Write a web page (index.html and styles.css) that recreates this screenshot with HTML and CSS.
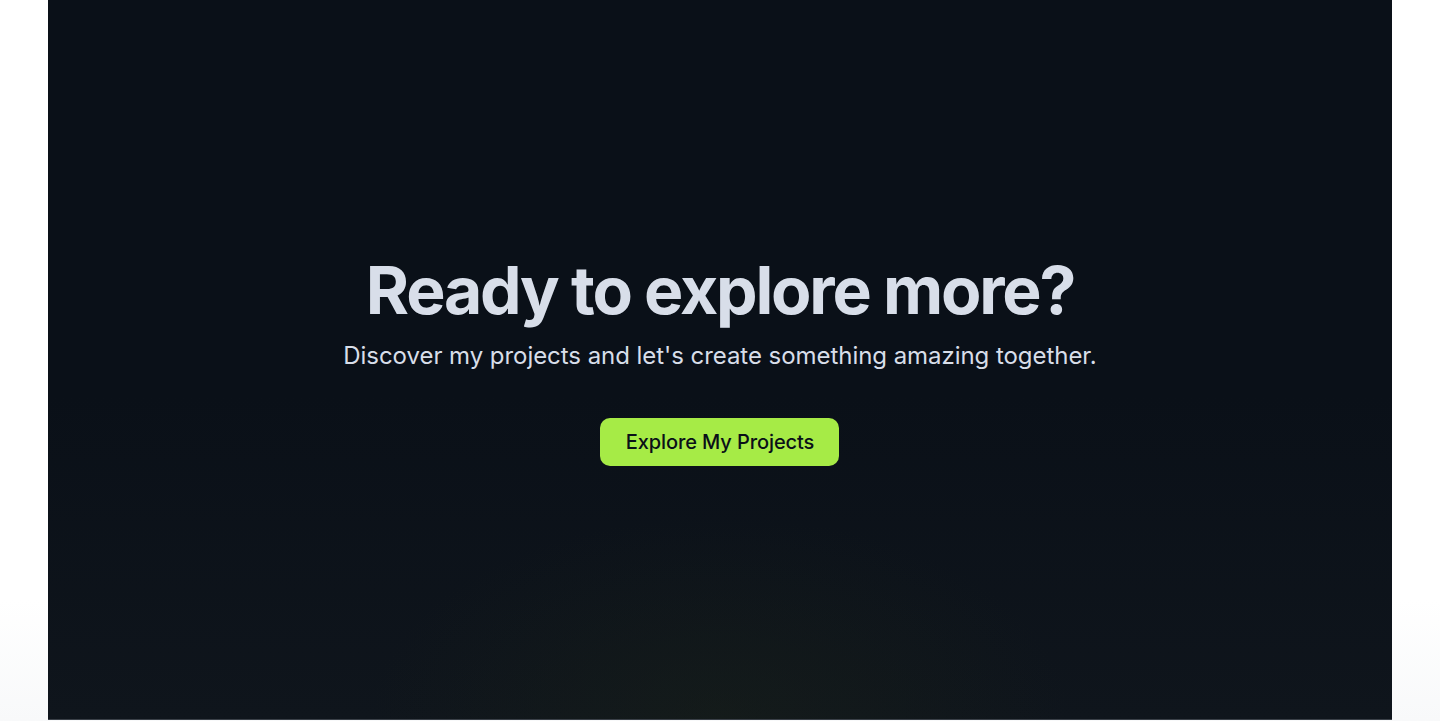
FILE: index.html
```html
<!DOCTYPE html>
<html lang="en">
<head>
<meta charset="utf-8">
<title>Ready to explore more?</title>
<link rel="stylesheet" href="styles.css">
</head>
<body>
<main class="page">
  <section class="cta">
    <div class="glow"></div>
    <div class="cta-inner">
      <h1 class="cta-title">Ready to explore more?</h1>
      <p class="cta-text">Discover my projects and let's create something amazing together.</p>
      <a class="cta-button" href="#">Explore My Projects</a>
    </div>
  </section>
</main>
</body>
</html>
```

FILE: styles.css
```css
* { box-sizing: border-box; }
html, body { margin: 0; padding: 0; }
body {
  background: linear-gradient(to bottom, #ffffff 0, #ffffff 600px, #f8f9fa 721px);
  font-family: Inter, "Noto Sans", sans-serif;
  height: 721px;
  overflow: hidden;
}
.page {
  padding: 0 48px;
  height: 721px;
}
.cta {
  position: relative;
  height: 720px;
  background: linear-gradient(to bottom, #0a1018 0%, #0a1018 55%, #0f151c 100%);
  border-bottom: 1px solid #3a4048;
  display: flex;
  align-items: center;
  justify-content: center;
  overflow: hidden;
}
.glow {
  position: absolute;
  left: 50%;
  bottom: -220px;
  width: 760px;
  height: 440px;
  transform: translateX(-50%);
  background: radial-gradient(ellipse at center, rgba(26, 34, 24, 0.45) 0%, rgba(20, 28, 24, 0) 65%);
  pointer-events: none;
}
.cta-inner {
  position: relative;
  display: flex;
  flex-direction: column;
  align-items: center;
  padding-bottom: 4px;
}
.cta-title {
  margin: 0;
  font-size: 66px;
  line-height: 80px;
  font-weight: 700;
  letter-spacing: -2.2px;
  color: #d8dee9;
}
.cta-text {
  margin: 10px 0 0;
  font-size: 24px;
  line-height: 32px;
  color: #d8dee9;
  letter-spacing: -0.05px;
}
.cta-button {
  margin-top: 46px;
  display: inline-flex;
  align-items: center;
  justify-content: center;
  width: 239px;
  height: 48px;
  border-radius: 10px;
  background: #a6eb46;
  color: #0a1018;
  font-size: 20px;
  font-weight: 500;
  text-decoration: none;
  letter-spacing: -0.1px;
}
```
